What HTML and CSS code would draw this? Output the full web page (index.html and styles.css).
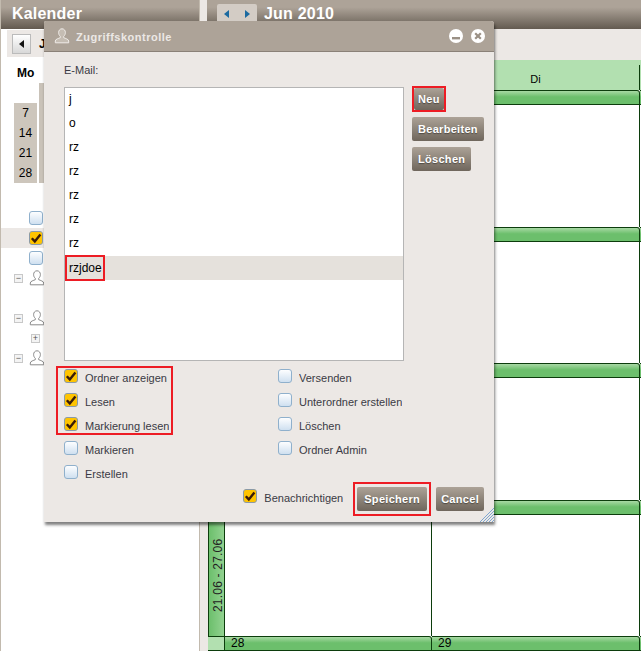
FILE: index.html
```html
<!DOCTYPE html>
<html lang="de">

<head>
    <meta charset="UTF-8">
    <title>Zugriffskontrolle</title>
    <link rel="stylesheet" href="styles.css">
</head>

<body>
    <svg class="defs" width="0" height="0">
        <symbol id="user" viewBox="0 0 16 16">
            <path d="M8 .8C5.8.8 4.6 2.6 4.6 4.6c0 1.5.7 2.9 1.7 3.7v1.4c-1.6.7-5 1.5-5 3.3v1.8h13.4V13c0-1.8-3.4-2.6-5-3.3V8.3c1-.8 1.7-2.2 1.7-3.7C11.4 2.6 10.2.8 8 .8z" />
        </symbol>
        <symbol id="tick" viewBox="0 0 14 14">
            <path d="M2.8 7.2l3 3.2 5.6-7" fill="none" stroke="#3a1c08" stroke-width="2.4" />
        </symbol>
    </svg>

    <div id="sidebar">
        <div class="header side-header">Kalender</div>
        <div class="side-tools">
            <div class="side-back"><span class="arrow-black"></span></div>
            <b>J</b>
        </div>
        <div class="side-day">Mo</div>
        <div class="month">
            <div class="week-nums">
                <div>7</div>
                <div>14</div>
                <div>21</div>
                <div>28</div>
            </div>
            <div class="month-strip"></div>
        </div>
        <div class="tree">
            <div class="tree-row with-cb"><span class="cb"></span></div>
            <div class="tree-row with-cb selected"><span class="cb on"><svg><use href="#tick" /></svg></span></div>
            <div class="tree-row with-cb"><span class="cb"></span></div>
            <div class="tree-row"><span class="toggle">−</span><svg class="tree-user"><use href="#user" /></svg></div>
            <div class="tree-row"></div>
            <div class="tree-row"><span class="toggle">−</span><svg class="tree-user"><use href="#user" /></svg></div>
            <div class="tree-row with-plus"><span class="toggle">+</span></div>
            <div class="tree-row"><span class="toggle">−</span><svg class="tree-user"><use href="#user" /></svg></div>
        </div>
    </div>

    <div id="main">
        <div class="header main-header">
            <div class="nav-arrows">
                <span class="arrow-left"></span>
                <span class="arrow-right"></span>
            </div>
            Jun 2010
        </div>
        <div class="main-tools"></div>
        <div class="cal-head">
            <div class="cal-day"></div>
            <div class="cal-day">Mo</div>
            <div class="cal-day di">Di</div>
        </div>
        <div class="week">
            <div class="corner"></div>
            <div class="day-bar"></div>
            <div class="day-bar"></div>
            <div class="day-bar"></div>
            <div class="week-label">31.05 - 06.06</div>
            <div class="cell"></div>
            <div class="cell"></div>
            <div class="cell"></div>
        </div>
        <div class="week">
            <div class="corner"></div>
            <div class="day-bar"></div>
            <div class="day-bar"></div>
            <div class="day-bar"></div>
            <div class="week-label">07.06 - 13.06</div>
            <div class="cell"></div>
            <div class="cell"></div>
            <div class="cell"></div>
        </div>
        <div class="week">
            <div class="corner"></div>
            <div class="day-bar"></div>
            <div class="day-bar"></div>
            <div class="day-bar"></div>
            <div class="week-label">14.06 - 20.06</div>
            <div class="cell"></div>
            <div class="cell"></div>
            <div class="cell"></div>
        </div>
        <div class="week">
            <div class="corner"></div>
            <div class="day-bar"></div>
            <div class="day-bar"></div>
            <div class="day-bar"></div>
            <div class="week-label">21.06 - 27.06</div>
            <div class="cell"></div>
            <div class="cell"></div>
            <div class="cell"></div>
        </div>
        <div class="week last">
            <div class="corner"></div>
            <div class="day-bar">28</div>
            <div class="day-bar">29</div>
            <div class="day-bar"></div>
        </div>
    </div>

    <div id="dialog">
        <div class="dialog-title">
            <svg class="title-user"><use href="#user" /></svg>
            <span class="title-text">Zugriffskontrolle</span>
            <span class="round-btn">
                <svg width="14" height="14" viewBox="0 0 14 14"><rect x="3" y="8" width="8" height="2.4" fill="#9a9085" /></svg>
            </span>
            <span class="round-btn">
                <svg width="14" height="14" viewBox="0 0 14 14"><path d="M4.2 4.2l5.6 5.6M9.8 4.2l-5.6 5.6" stroke="#9a9085" stroke-width="2.2" /></svg>
            </span>
        </div>
        <div class="dialog-body">
            <div class="mail-label">E-Mail:</div>
            <div class="list-row">
                <div class="mail-list">
                    <div class="mail-item">j</div>
                    <div class="mail-item">o</div>
                    <div class="mail-item">rz</div>
                    <div class="mail-item">rz</div>
                    <div class="mail-item">rz</div>
                    <div class="mail-item">rz</div>
                    <div class="mail-item">rz</div>
                    <div class="mail-item active"><span class="marked mail-mark">rzjdoe</span></div>
                </div>
                <div class="list-buttons">
                    <div class="marked neu-mark"><button class="btn btn-neu">Neu</button></div>
                    <button class="btn">Bearbeiten</button>
                    <button class="btn">Löschen</button>
                </div>
            </div>
            <div class="options">
                <div class="option-col left-col">
                    <div class="marked option-mark">
                        <div class="option"><span class="cb on"><svg><use href="#tick" /></svg></span><span class="option-text">Ordner anzeigen</span></div>
                        <div class="option"><span class="cb on"><svg><use href="#tick" /></svg></span><span class="option-text">Lesen</span></div>
                        <div class="option"><span class="cb on"><svg><use href="#tick" /></svg></span><span class="option-text">Markierung lesen</span></div>
                    </div>
                    <div class="option"><span class="cb"></span><span class="option-text">Markieren</span></div>
                    <div class="option"><span class="cb"></span><span class="option-text">Erstellen</span></div>
                </div>
                <div class="option-col right-col">
                    <div class="option"><span class="cb"></span><span class="option-text">Versenden</span></div>
                    <div class="option"><span class="cb"></span><span class="option-text">Unterordner erstellen</span></div>
                    <div class="option"><span class="cb"></span><span class="option-text">Löschen</span></div>
                    <div class="option"><span class="cb"></span><span class="option-text">Ordner Admin</span></div>
                </div>
            </div>
            <div class="dialog-footer">
                <div class="option"><span class="cb on"><svg><use href="#tick" /></svg></span><span class="option-text">Benachrichtigen</span></div>
                <div class="marked save-mark"><button class="btn btn-save">Speichern</button></div>
                <button class="btn btn-cancel">Cancel</button>
            </div>
        </div>
        <svg class="grip" width="14" height="14" viewBox="0 0 14 14">
            <path d="M0 14L14 0M3 14L14 3M6 14l8-8M9 14l5-5M12 14l2-2" stroke="#7ea6d0" stroke-width="1" />
        </svg>
    </div>
</body>

</html>
```
FILE: styles.css
```css
body {
    font-family: "Liberation Sans", Arial, sans-serif;
    font-size: 11px;
    background-color: #ece8e5;
    margin: 0;
    width: 641px;
    height: 651px;
    overflow: hidden;
    display: flex;
    position: relative;
    color: #000;
}

.defs {
    position: absolute;
}

.header {
    height: 29px;
    background: linear-gradient(#ada398 25%, #635a50);
    color: #fff;
    font-size: 16px;
    font-weight: bold;
    letter-spacing: 0.2px;
    line-height: 28px;
    display: flex;
}

/* left column */
#sidebar {
    width: 198px;
    height: 651px;
    background-color: #fff;
    border-left: 1px solid #c2baae;
    border-right: 1px solid #c2baae;
}

.side-header {
    padding-left: 11px;
    margin-bottom: 1px;
}

.side-tools {
    height: 27px;
    margin-left: 6px;
    background-color: #ece8e5;
    display: flex;
    align-items: center;
    gap: 8px;
    font-size: 12px;
}

.side-back {
    width: 19px;
    height: 20px;
    margin-left: 5px;
    border: 1px solid #bbb;
    box-sizing: border-box;
    background: linear-gradient(#fff, #d8d8d8);
    display: flex;
    align-items: center;
    justify-content: center;
}

.arrow-black {
    border: 4px solid transparent;
    border-right: 5px solid #111;
    border-left: 0;
}

.side-day {
    height: 26px;
    padding-left: 16px;
    line-height: 33px;
    font-weight: bold;
    font-size: 12px;
}

.month {
    display: flex;
    align-items: flex-end;
    height: 100px;
    margin-left: 13px;
    gap: 2px;
}

.week-nums {
    width: 23px;
    background-color: #cdc6bc;
    font-size: 12px;
    text-align: center;
}

.week-nums div {
    height: 20px;
    line-height: 21px;
}

.month-strip {
    width: 5px;
    height: 100px;
    background-color: #c9c2b8;
}

.tree {
    margin-top: 25px;
}

.tree-row {
    height: 20px;
    display: flex;
    align-items: center;
    padding-left: 13px;
}

.with-cb {
    padding-left: 28px;
}

.with-plus {
    padding-left: 30px;
}

.selected {
    background-color: #ece8e5;
}

.toggle {
    width: 9px;
    height: 9px;
    border: 1px solid #c8c8c8;
    box-sizing: border-box;
    background-color: #f4f4f4;
    font-size: 9px;
    line-height: 7px;
    text-align: center;
    color: #555;
}

.tree-user {
    width: 16px;
    height: 16px;
    margin-left: 6px;
    fill: #fff;
    stroke: #8a8a8a;
}

/* checkboxes */
.cb {
    width: 14px;
    height: 14px;
    flex: none;
    box-sizing: border-box;
    border: 1px solid #8fb0cc;
    border-radius: 3px;
    background: linear-gradient(#fdfeff, #cfe0f0);
}

.cb.on {
    border-color: #8a9aa8;
    background: #ffc400;
}

.cb svg {
    display: block;
    width: 14px;
    height: 14px;
    margin: -1px;
}

/* calendar */
#main {
    flex: 1;
    margin-left: 7px;
    min-width: 0;
}

.main-header {
    padding-left: 10px;
    gap: 7px;
}

.nav-arrows {
    width: 40px;
    height: 20px;
    margin-top: 4px;
    background-color: #d3ccc5;
    border-radius: 2px;
    display: flex;
    align-items: center;
    justify-content: space-between;
    padding: 0 7px;
    box-sizing: border-box;
}

.arrow-left {
    border: 4px solid transparent;
    border-right: 5px solid #1b6aa0;
    border-left: 0;
}

.arrow-right {
    border: 4px solid transparent;
    border-left: 5px solid #1b6aa0;
    border-right: 0;
}

.main-tools {
    height: 30px;
    margin-top: 1px;
}

.cal-head {
    height: 30px;
    padding-left: 1px;
    background-color: #b2e0b0;
    display: grid;
    grid-template-columns: 17px 207px 208px;
}

.cal-day {
    text-align: center;
    line-height: 38px;
}

.di {
    height: 25px;
    margin-top: 5px;
    line-height: 28px;
    border-right: 1px solid #0c3d0c;
}

.week {
    height: 136px;
    margin-left: 1px;
    background-color: #fff;
    display: grid;
    grid-template-columns: 17px 207px 208px 1fr;
    grid-template-rows: 15px 1fr;
}

.week:nth-child(even) {
    height: 137px;
}

.corner {
    border-top: 1px solid #0c3d0c;
    border-bottom: 1px solid #0c3d0c;
    border-right: 1px solid #0c3d0c;
    background-color: #b2e0b0;
}

.day-bar {
    border-top: 1px solid #0c3d0c;
    border-bottom: 1px solid #0c3d0c;
    border-right: 1px solid #0c3d0c;
    background: linear-gradient(#a8d9a4, #6cbf6c 45%);
    border-radius: 0 3px 0 0;
    padding-left: 6px;
    font-size: 12px;
    line-height: 13px;
}

.week-label {
    border-left: 1px solid #0c3d0c;
    border-right: 1px solid #0c3d0c;
    background: linear-gradient(to right, #92d290, #6cbf6c);
    writing-mode: vertical-rl;
    transform: rotate(180deg);
    text-align: center;
    font-size: 12px;
    line-height: 19px;
    color: #222;
    letter-spacing: 0.2px;
    overflow: hidden;
}

.cell {
    border-right: 1px solid #0c3d0c;
}

.week.last {
    height: 15px;
    grid-template-rows: 15px;
}

/* dialog */
#dialog {
    position: absolute;
    left: 44px;
    top: 21px;
    width: 450px;
    height: 501px;
    background-color: #ece8e5;
    border-radius: 2px 3px 0 0;
    box-shadow: 1px 3px 3px rgba(0, 0, 0, 0.5);
}

.dialog-title {
    height: 30px;
    background-color: #ada398;
    border-bottom: 1px solid #8a8178;
    border-radius: 2px 3px 0 0;
    display: flex;
    align-items: center;
    padding: 0 9px 0 10px;
    gap: 8px;
}

.title-user {
    width: 16px;
    height: 16px;
    margin-top: -1px;
    margin-right: 6px;
    fill: #c5bdb3;
    stroke: #f0ece8;
}

.title-text {
    flex: 1;
    color: #ece8e5;
    font-weight: bold;
    letter-spacing: 0.5px;
    margin: 2px 0 0 -8px;
}

.round-btn {
    width: 14px;
    height: 14px;
    background-color: #fff;
    border-radius: 50%;
    display: block;
}

.round-btn svg {
    display: block;
}

.dialog-body {
    padding: 12px 10px 0 20px;
    color: #3a3a44;
}

.mail-label {
    height: 23px;
    line-height: 13px;
}

.list-row {
    display: flex;
    align-items: flex-start;
    gap: 8px;
}

.mail-list {
    width: 340px;
    height: 274px;
    box-sizing: border-box;
    border: 1px solid #b5b5b5;
    background-color: #fff;
    flex: none;
    color: #000;
}

.mail-item {
    height: 24px;
    line-height: 23px;
    padding-left: 4px;
    font-size: 12px;
}

.mail-item.active {
    background-color: #e5e1dc;
    display: flex;
    padding-left: 0;
    align-items: center;
}

.marked {
    border: 2px solid #ed1c24;
    box-sizing: border-box;
}

.mail-mark {
    height: 26px;
    line-height: 22px;
    width: 40px;
    padding-left: 2px;
    flex: none;
}

.list-buttons {
    margin-top: -1px;
    display: flex;
    flex-direction: column;
    align-items: flex-start;
    gap: 6px;
}

.neu-mark {
    margin-bottom: -1px;
    height: 26px;
    display: flex;
}

.btn {
    height: 24px;
    padding: 0 6px;
    border: 0;
    border-radius: 2px;
    background: linear-gradient(#aca297, #6f665c);
    color: #fff;
    font-family: "Liberation Sans", Arial, sans-serif;
    font-size: 11px;
    font-weight: bold;
    letter-spacing: 0.3px;
    text-shadow: 0 1px 1px rgba(0, 0, 0, 0.4);
}

.btn-neu {
    height: 22px;
    padding: 0 4px;
}

.btn-save {
    padding: 0 7px;
}

.btn-cancel {
    padding: 0 5px;
}

.options {
    margin-left: -8px;
    display: flex;
}

.option-col {
    display: flex;
    flex-direction: column;
    gap: 8px;
}

.left-col {
    width: 222px;
    padding-top: 5px;
}

.right-col {
    padding-top: 7px;
}

.option {
    height: 16px;
    display: flex;
    align-items: center;
    gap: 7px;
    white-space: nowrap;
}

.option-text {
    height: 12px;
    line-height: 13px;
    margin-top: 4px;
    overflow: hidden;
}

.left-col > .option {
    padding-left: 8px;
}

.left-col > .option-mark + .option {
    margin-top: -3px;
}

.option-mark {
    width: 117px;
    padding: 0 0 1px 6px;
    display: flex;
    flex-direction: column;
    gap: 8px;
}

.dialog-footer {
    margin-top: 2px;
    display: flex;
    justify-content: flex-end;
    align-items: flex-start;
    gap: 5px;
}

.dialog-footer .option {
    margin: 6px 5px 0 0;
}

.dialog-footer > .btn {
    margin-top: 5px;
}

.save-mark {
    padding: 3px 2px;
    display: flex;
}

.grip {
    position: absolute;
    right: 0;
    bottom: 0;
}
```
